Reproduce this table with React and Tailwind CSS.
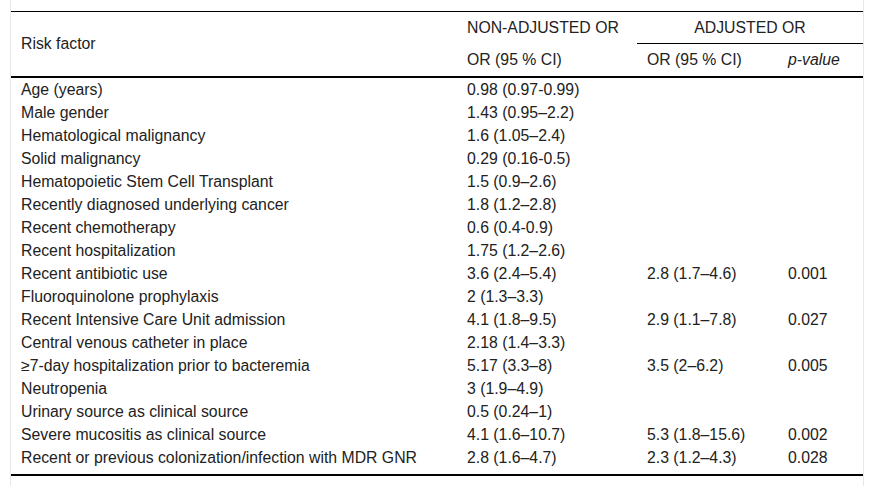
import React from "react";

const rows = [
  ["Age (years)", "0.98 (0.97-0.99)", "", ""],
  ["Male gender", "1.43 (0.95–2.2)", "", ""],
  ["Hematological malignancy", "1.6 (1.05–2.4)", "", ""],
  ["Solid malignancy", "0.29 (0.16-0.5)", "", ""],
  ["Hematopoietic Stem Cell Transplant", "1.5 (0.9–2.6)", "", ""],
  ["Recently diagnosed underlying cancer", "1.8 (1.2–2.8)", "", ""],
  ["Recent chemotherapy", "0.6 (0.4-0.9)", "", ""],
  ["Recent hospitalization", "1.75 (1.2–2.6)", "", ""],
  ["Recent antibiotic use", "3.6 (2.4–5.4)", "2.8 (1.7–4.6)", "0.001"],
  ["Fluoroquinolone prophylaxis", "2 (1.3–3.3)", "", ""],
  ["Recent Intensive Care Unit admission", "4.1 (1.8–9.5)", "2.9 (1.1–7.8)", "0.027"],
  ["Central venous catheter in place", "2.18 (1.4–3.3)", "", ""],
  ["≥7-day hospitalization prior to bacteremia", "5.17 (3.3–8)", "3.5 (2–6.2)", "0.005"],
  ["Neutropenia", "3 (1.9–4.9)", "", ""],
  ["Urinary source as clinical source", "0.5 (0.24–1)", "", ""],
  ["Severe mucositis as clinical source", "4.1 (1.6–10.7)", "5.3 (1.8–15.6)", "0.002"],
  ["Recent or previous colonization/infection with MDR GNR", "2.8 (1.6–4.7)", "2.3 (1.2–4.3)", "0.028"],
];

export default function App() {
  return (
    <div
      className="w-[874px] h-[486px] bg-white pl-[10px] pr-[10px] text-[15.8px] text-[#222]"
      style={{ fontFamily: '"Liberation Sans", Arial, sans-serif' }}
    >
      <div className="h-full border-x border-[#e8e8e8] pt-[11px]">
        <table className="border-collapse table-fixed w-[852px]">
          <colgroup>
            <col className="w-[446px]" />
            <col className="w-[180px]" />
            <col className="w-[141px]" />
            <col className="w-[85px]" />
          </colgroup>
          <thead>
            <tr className="h-[32px] border-t border-black">
              <th rowSpan={2} className="font-normal text-left align-middle pl-[10px] border-b-2 border-black">
                Risk factor
              </th>
              <th className="font-normal text-left pl-[10px] align-middle whitespace-nowrap">NON-ADJUSTED OR</th>
              <th colSpan={2} className="font-normal text-center align-middle border-b border-black">
                ADJUSTED OR
              </th>
            </tr>
            <tr className="h-[33px] border-b-2 border-black">
              <th className="font-normal text-left pl-[10px] align-middle">OR (95 % CI)</th>
              <th className="font-normal text-left pl-[10px] align-middle">OR (95 % CI)</th>
              <th className="font-normal text-left pl-[10px] align-middle italic">p-value</th>
            </tr>
          </thead>
          <tbody className="border-b-2 border-black">
            {rows.map((r, i) => (
              <tr key={i} className={i === rows.length - 1 ? "h-[29px]" : "h-[23px]"}>
                <td className="pl-[10px] leading-[23px] whitespace-nowrap align-top">{r[0]}</td>
                <td className="pl-[10px] leading-[23px] whitespace-nowrap align-top">{r[1]}</td>
                <td className="pl-[10px] leading-[23px] whitespace-nowrap align-top">{r[2]}</td>
                <td className="pl-[10px] leading-[23px] whitespace-nowrap align-top">{r[3]}</td>
              </tr>
            ))}
          </tbody>
        </table>
      </div>
    </div>
  );
}
